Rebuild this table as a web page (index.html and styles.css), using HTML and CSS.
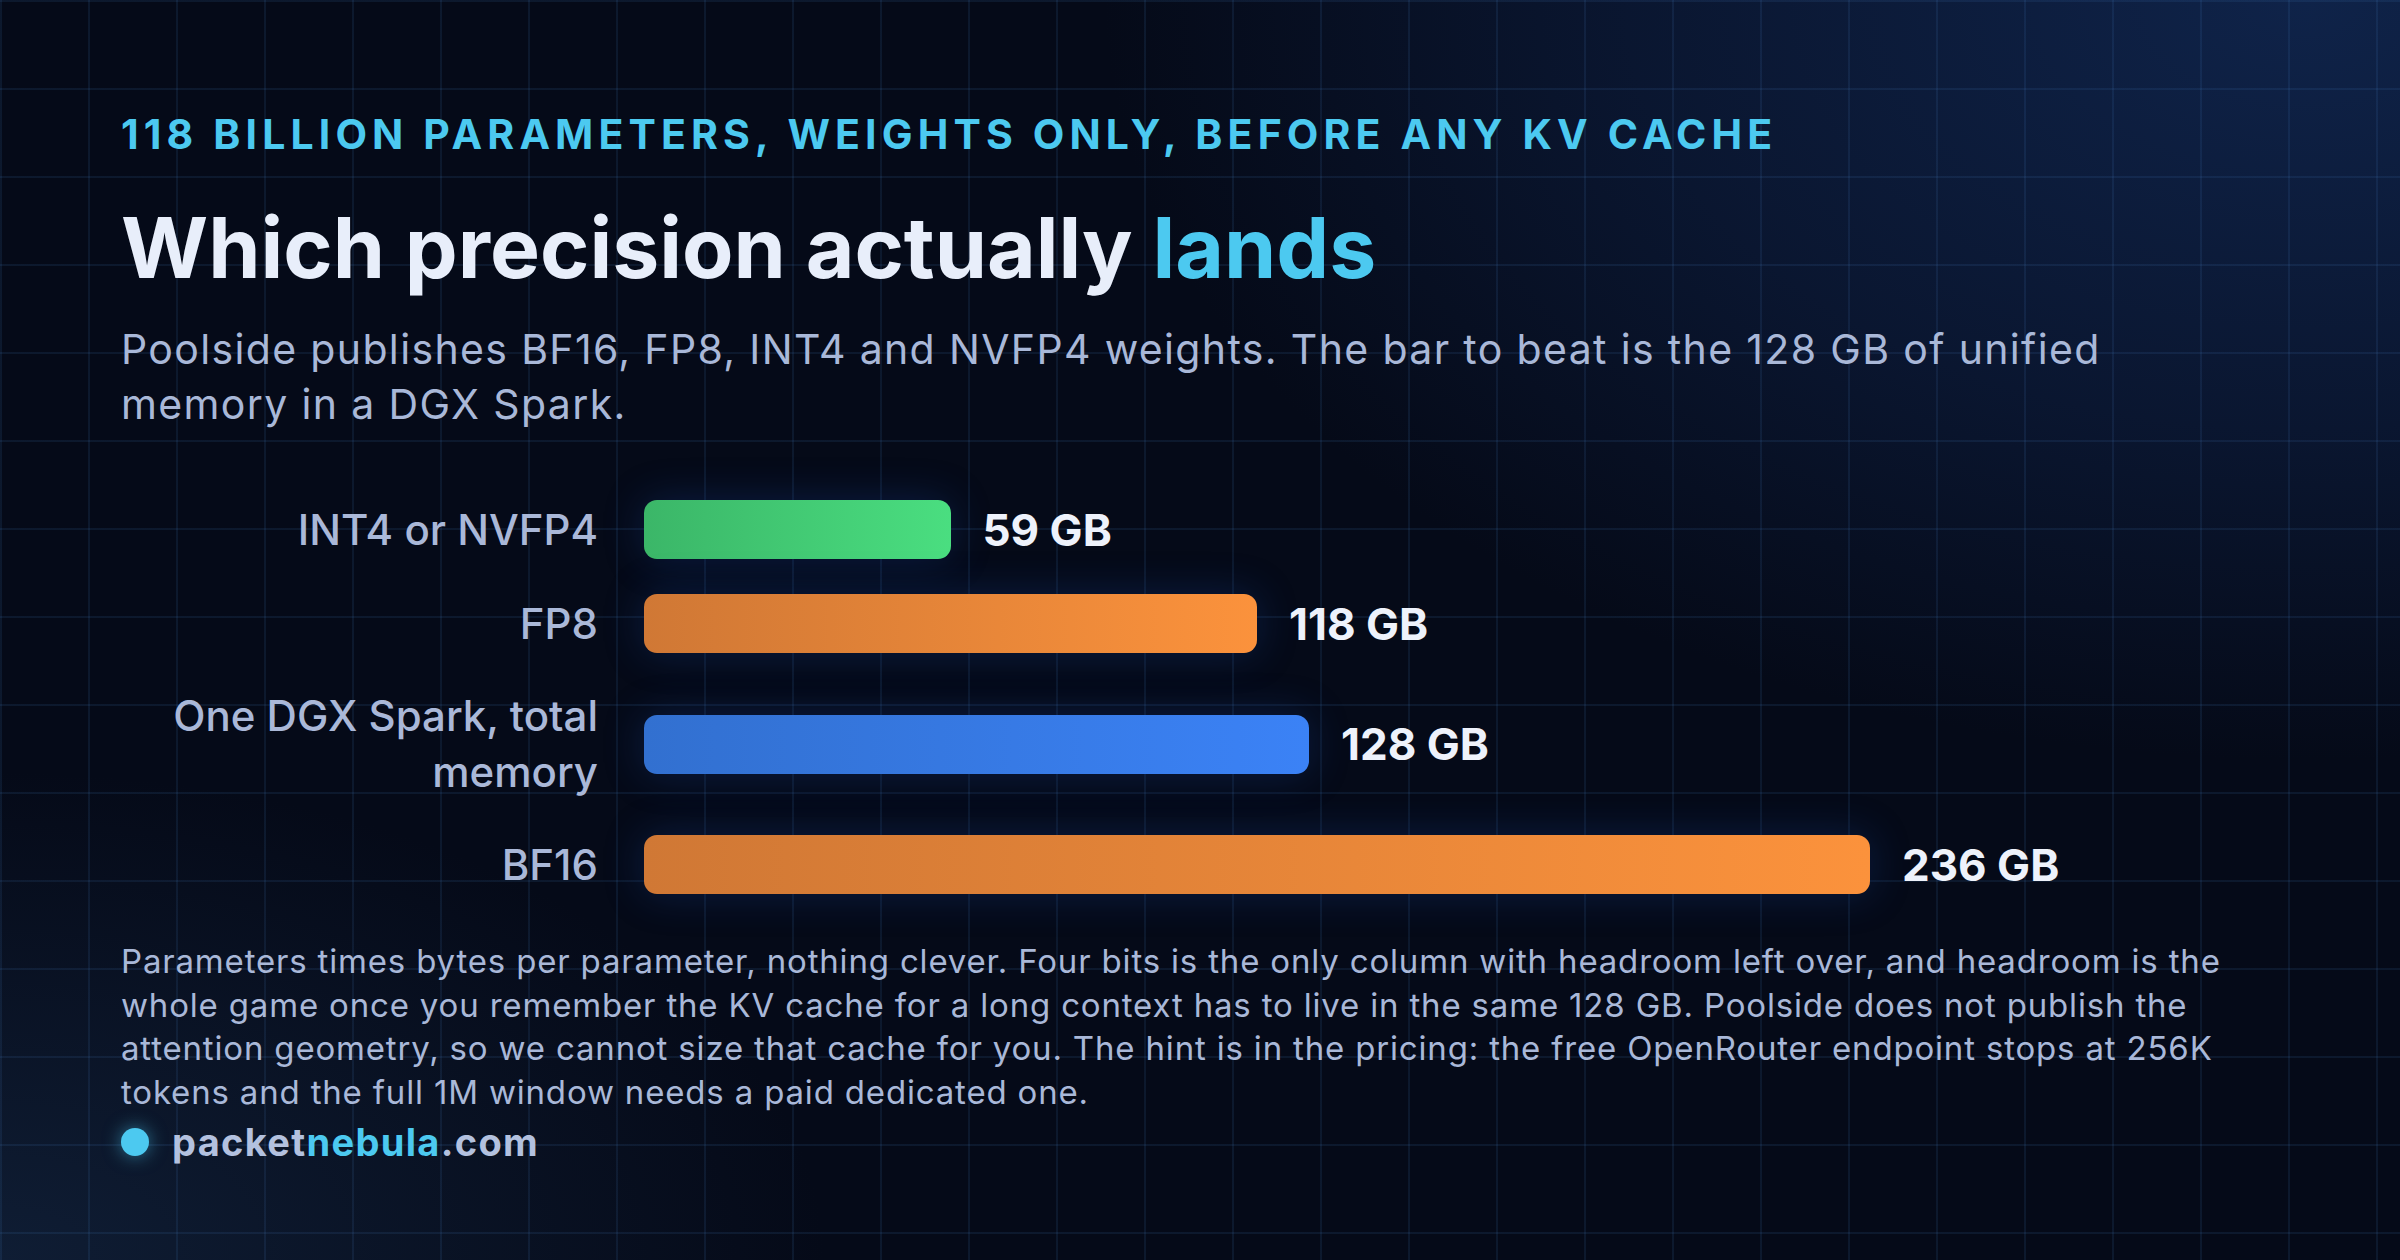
FILE: index.html
```html
<!DOCTYPE html>
<html lang="en">
<head>
<meta charset="utf-8">
<title>Which precision actually lands</title>
<link rel="stylesheet" href="styles.css">
</head>
<body>
<main class="card">
  <p class="eyebrow">118 billion parameters, weights only, before any KV cache</p>
  <h1 class="title">Which precision actually <span class="accent">lands</span></h1>
  <p class="lede">Poolside publishes BF16, FP8, INT4 and NVFP4 weights. The bar to beat is the 128 GB of unified memory in a DGX Spark.</p>

  <section class="chart">
    <div class="row">
      <div class="label">INT4 or NVFP4</div>
      <div class="track">
        <div class="bar bar-green" style="width:25%"></div>
        <div class="value">59 GB</div>
      </div>
    </div>
    <div class="row">
      <div class="label">FP8</div>
      <div class="track">
        <div class="bar bar-orange" style="width:50%"></div>
        <div class="value">118 GB</div>
      </div>
    </div>
    <div class="row">
      <div class="label">One DGX Spark, total memory</div>
      <div class="track">
        <div class="bar bar-blue" style="width:54.24%"></div>
        <div class="value">128 GB</div>
      </div>
    </div>
    <div class="row">
      <div class="label">BF16</div>
      <div class="track">
        <div class="bar bar-orange" style="width:100%"></div>
        <div class="value">236 GB</div>
      </div>
    </div>
  </section>

  <p class="note">Parameters times bytes per parameter, nothing clever. Four bits is the only column with headroom left over, and headroom is the whole game once you remember the KV cache for a long context has to live in the same 128 GB. Poolside does not publish the attention geometry, so we cannot size that cache for you. The hint is in the pricing: the free OpenRouter endpoint stops at 256K tokens and the full 1M window needs a paid dedicated one.</p>

  <footer class="brand">
    <span class="dot"></span>
    <span class="site">packet<span class="accent">nebula</span>.com</span>
  </footer>
</main>
</body>
</html>
```

FILE: styles.css
```css
html, body {
  margin: 0;
  padding: 0;
}

body {
  width: 2400px;
  height: 1260px;
  overflow: hidden;
  font-family: "Inter", "Noto Sans", sans-serif;
  color: #e6ecf8;
  background:
    linear-gradient(rgba(70, 130, 200, 0.12) 2px, transparent 2px) 0 0 / 88px 88px,
    linear-gradient(90deg, rgba(70, 130, 200, 0.12) 2px, transparent 2px) 0 0 / 88px 88px,
    radial-gradient(ellipse 1500px 950px at 96% 0%, #0f2349 0%, rgba(14, 32, 68, 0.55) 45%, rgba(5, 10, 24, 0) 80%),
    radial-gradient(ellipse 1100px 650px at 0% 100%, #0f1d34 0%, rgba(5, 10, 24, 0) 75%),
    #050a18;
}

.card {
  box-sizing: border-box;
  width: 2400px;
  height: 1260px;
  padding: 110px 121px 0;
  display: flex;
  flex-direction: column;
}

.accent {
  color: #4cc9f0;
}

.eyebrow {
  margin: 0;
  font-size: 41px;
  line-height: 49px;
  font-weight: 700;
  text-transform: uppercase;
  letter-spacing: 0.125em;
  color: #4cc9f0;
}

.title {
  margin: 39px 0 0;
  font-size: 84px;
  line-height: 100px;
  font-weight: 700;
  letter-spacing: 0;
  color: #e8eefa;
}

.lede {
  margin: 24px 0 0;
  max-width: 2040px;
  font-size: 41px;
  line-height: 55px;
  font-weight: 400;
  letter-spacing: 0.033em;
  color: #a9b8d8;
}

.chart {
  margin-top: 68px;
  display: flex;
  flex-direction: column;
  gap: 35px;
}

.row {
  display: grid;
  grid-template-columns: 477px 1226px;
  column-gap: 46px;
  align-items: center;
}

.label {
  text-align: right;
  font-size: 42px;
  line-height: 56px;
  font-weight: 500;
  color: #aab8d8;
}

.track {
  display: flex;
  align-items: center;
}

.bar {
  flex-shrink: 0;
  height: 59px;
  border-radius: 13px;
  box-shadow: 0 0 40px rgba(30, 80, 180, 0.28);
}

.bar-green {
  background: linear-gradient(90deg, #3bb668, #4ade80);
}

.bar-orange {
  background: linear-gradient(90deg, #d07835, #fb923c);
}

.bar-blue {
  background: linear-gradient(90deg, #3270d0, #3b82f6);
}

.value {
  flex-shrink: 0;
  margin-left: 32px;
  font-size: 44px;
  font-weight: 700;
  color: #eef2fb;
  white-space: nowrap;
}

.note {
  margin: 46px 0 0;
  max-width: 2140px;
  font-size: 33px;
  line-height: 43.5px;
  letter-spacing: 0.025em;
  color: #a9b8d8;
}

.brand {
  margin-top: 4px;
  display: flex;
  align-items: center;
  gap: 23px;
}

.dot {
  width: 28px;
  height: 28px;
  border-radius: 50%;
  background: #4cc9f0;
  box-shadow: 0 0 18px rgba(76, 201, 240, 0.55);
}

.site {
  font-size: 38px;
  line-height: 48px;
  font-weight: 700;
  letter-spacing: 0.035em;
  color: #b3c1df;
}
```
